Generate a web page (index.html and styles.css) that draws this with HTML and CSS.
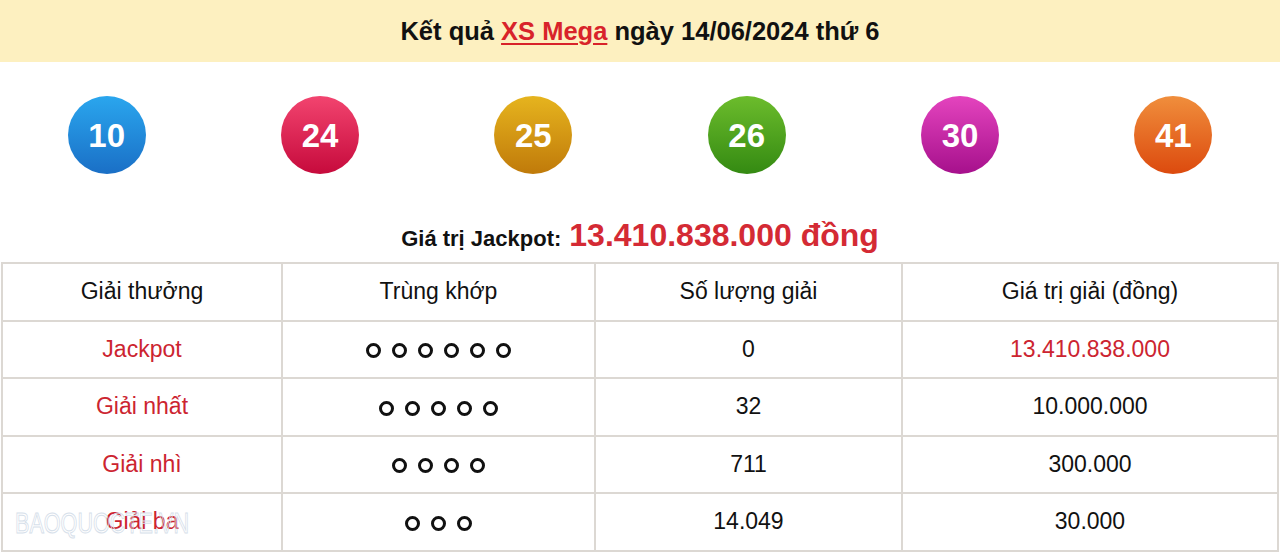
FILE: index.html
```html
<!DOCTYPE html>
<html lang="vi">
<head>
<meta charset="utf-8">
<title>Kết quả XS Mega</title>
<link rel="stylesheet" href="styles.css">
</head>
<body>
<header class="title">
  <h1>Kết quả <a href="#" class="title-link">XS Mega</a> ngày 14/06/2024 thứ 6</h1>
</header>
<section class="balls">
  <div class="ball-cell"><span class="ball ball-blue">10</span></div>
  <div class="ball-cell"><span class="ball ball-red">24</span></div>
  <div class="ball-cell"><span class="ball ball-gold">25</span></div>
  <div class="ball-cell"><span class="ball ball-green">26</span></div>
  <div class="ball-cell"><span class="ball ball-pink">30</span></div>
  <div class="ball-cell"><span class="ball ball-orange">41</span></div>
</section>
<p class="jackpot"><span class="jackpot-label">Giá trị Jackpot:</span> <span class="jackpot-value">13.410.838.000 đồng</span></p>
<div class="table-wrap">
  <table class="prizes">
    <colgroup>
      <col class="c1"><col class="c2"><col class="c3"><col class="c4">
    </colgroup>
    <thead>
      <tr><th>Giải thưởng</th><th>Trùng khớp</th><th>Số lượng giải</th><th>Giá trị giải (đồng)</th></tr>
    </thead>
    <tbody>
      <tr>
        <td class="red">Jackpot</td>
        <td><span class="rings"><i class="ring"></i><i class="ring"></i><i class="ring"></i><i class="ring"></i><i class="ring"></i><i class="ring"></i></span></td>
        <td>0</td>
        <td class="red">13.410.838.000</td>
      </tr>
      <tr>
        <td class="red">Giải nhất</td>
        <td><span class="rings"><i class="ring"></i><i class="ring"></i><i class="ring"></i><i class="ring"></i><i class="ring"></i></span></td>
        <td>32</td>
        <td>10.000.000</td>
      </tr>
      <tr>
        <td class="red">Giải nhì</td>
        <td><span class="rings"><i class="ring"></i><i class="ring"></i><i class="ring"></i><i class="ring"></i></span></td>
        <td>711</td>
        <td>300.000</td>
      </tr>
      <tr>
        <td class="red">Giải ba</td>
        <td><span class="rings"><i class="ring"></i><i class="ring"></i><i class="ring"></i></span></td>
        <td>14.049</td>
        <td>30.000</td>
      </tr>
    </tbody>
  </table>
  <span class="watermark">BAOQUOCTE.VN</span>
</div>
</body>
</html>
```
FILE: styles.css
```css
html, body {
  margin: 0;
  padding: 0;
  background: #ffffff;
  font-family: "Liberation Sans", Arial, sans-serif;
  color: #111111;
}

.title {
  height: 62px;
  background: #fdf0c0;
  display: flex;
  align-items: center;
  justify-content: center;
}

.title h1 {
  margin: 0;
  font-size: 25.5px;
  font-weight: bold;
  color: #111111;
}

.title-link {
  color: #d8232a;
  text-decoration: underline;
  text-decoration-thickness: 2px;
  text-underline-offset: 3px;
}

.balls {
  display: grid;
  grid-template-columns: repeat(6, 1fr);
  padding-top: 34px;
}

.ball-cell {
  display: flex;
  justify-content: center;
}

.ball {
  width: 78px;
  height: 78px;
  border-radius: 50%;
  display: flex;
  align-items: center;
  justify-content: center;
  color: #ffffff;
  font-size: 33px;
  font-weight: bold;
  line-height: 1;
}

.ball-blue { background: linear-gradient(#2aa6ee, #1a6fc6); }
.ball-red { background: linear-gradient(#f2446f, #c60a3c); }
.ball-gold { background: linear-gradient(#e6b41e, #c07a0a); }
.ball-green { background: linear-gradient(#6cbc2c, #348a12); }
.ball-pink { background: linear-gradient(#e444be, #a6108c); }
.ball-orange { background: linear-gradient(#f08e3c, #dc4a0e); }

.jackpot {
  margin: 43px 0 0;
  height: 45px;
  display: flex;
  align-items: baseline;
  justify-content: center;
  gap: 8px;
}

.jackpot-label {
  font-size: 22px;
  font-weight: bold;
  color: #111111;
}

.jackpot-value {
  font-size: 32px;
  font-weight: bold;
  color: #d42a34;
}

.table-wrap {
  position: relative;
  padding: 0 1px;
}

.prizes {
  width: 100%;
  border-collapse: collapse;
  table-layout: fixed;
}

.c1 { width: 280px; }
.c2 { width: 313px; }
.c3 { width: 307px; }

.prizes th,
.prizes td {
  border: 2px solid #dcd8d3;
  height: 55.5px;
  padding: 0;
  text-align: center;
  vertical-align: middle;
  font-size: 23px;
  font-weight: normal;
  color: #111111;
}

.prizes td.red {
  color: #cc2430;
}

.rings {
  display: inline-flex;
  gap: 11px;
  vertical-align: middle;
}

.ring {
  width: 15px;
  height: 15px;
  box-sizing: border-box;
  border: 3px solid #111111;
  border-radius: 50%;
}

.watermark {
  position: absolute;
  left: 15px;
  bottom: 12px;
  font-size: 30px;
  color: transparent;
  -webkit-text-stroke: 1px #d6e0ea;
  transform: scaleX(0.72);
  transform-origin: left center;
  pointer-events: none;
}
```
